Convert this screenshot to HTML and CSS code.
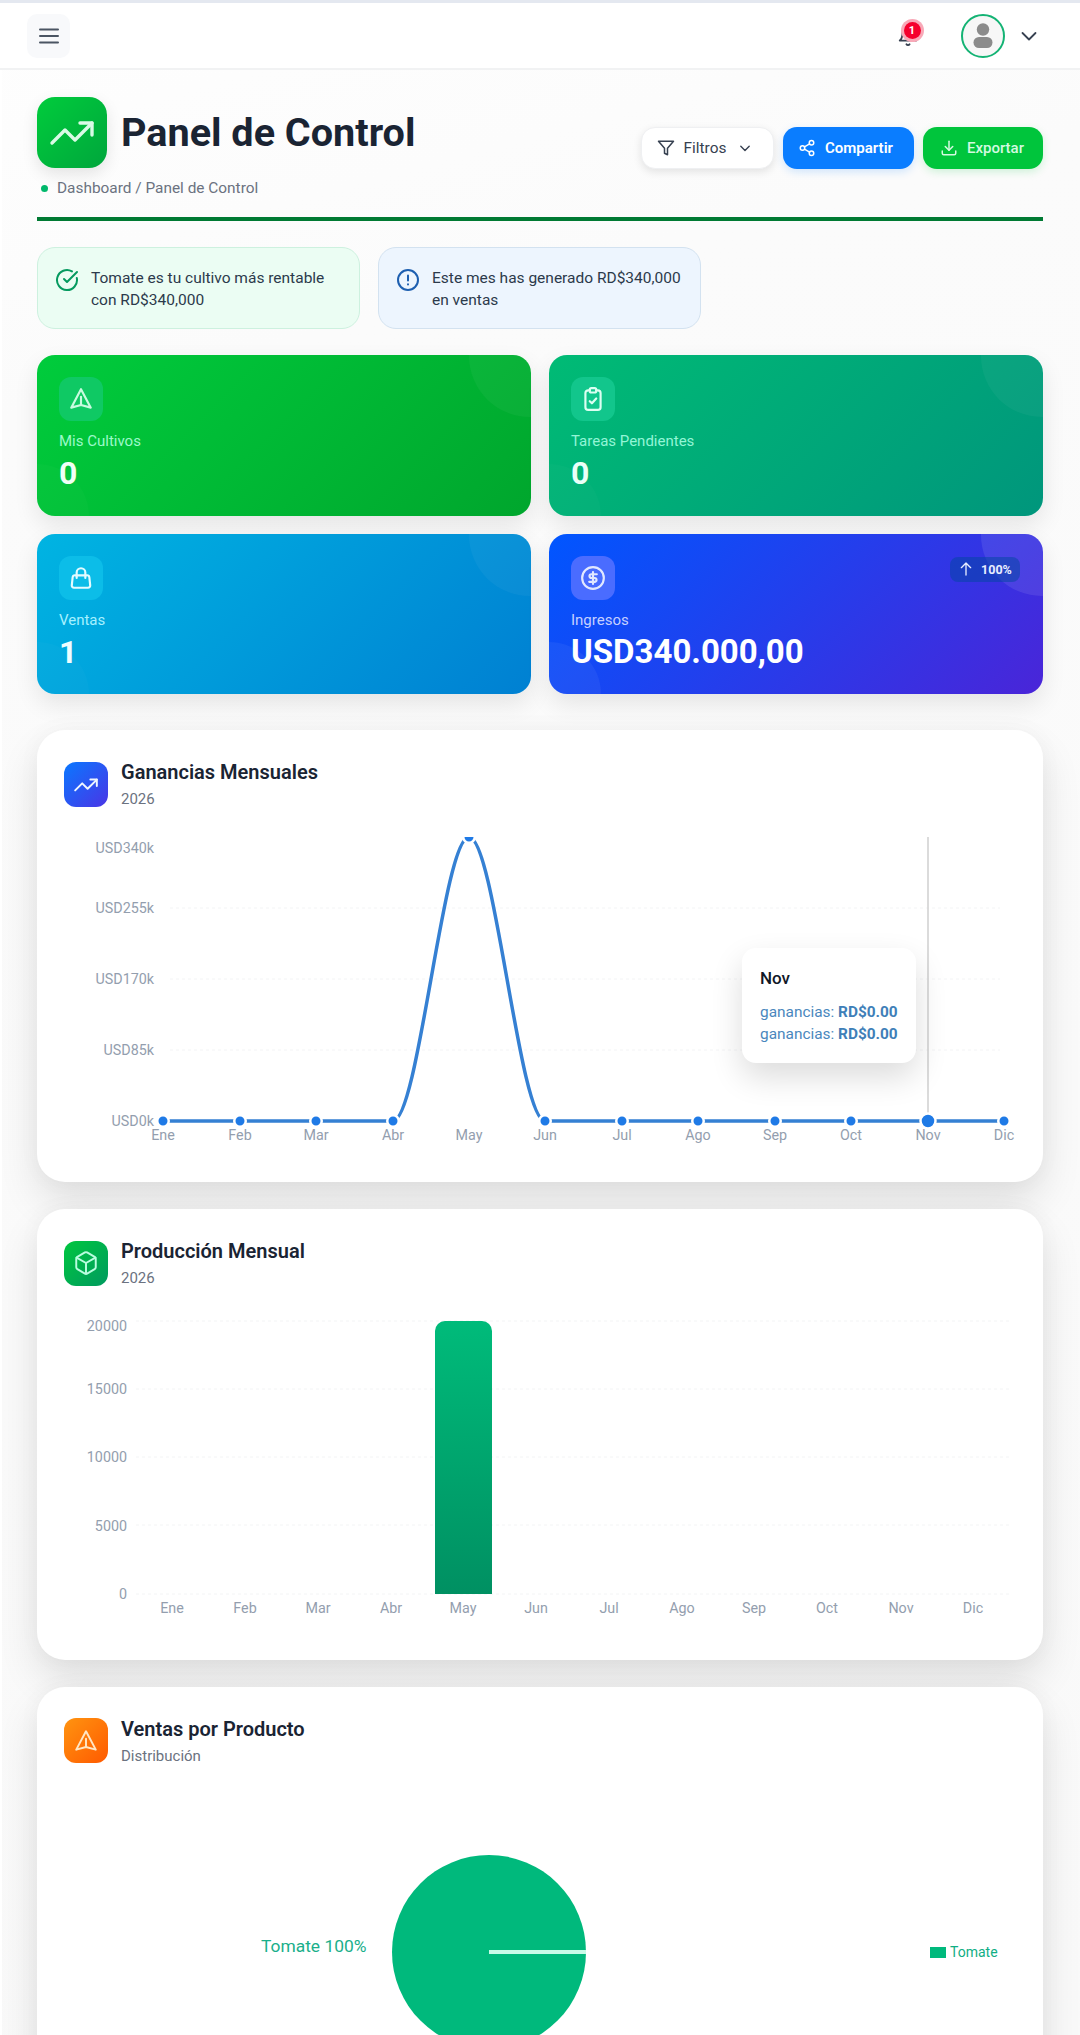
FILE: index.html
```html
<!DOCTYPE html>
<html lang="es">
<head>
<meta charset="utf-8">
<title>Panel de Control</title>
<link rel="stylesheet" href="styles.css">
</head>
<body>
<header class="topbar">
  <button class="menu-btn" aria-label="Menú">
    <svg class="ico" width="24" height="24" viewBox="0 0 24 24"><path d="M3 5.5h18M3 12h18M3 18.5h18"/></svg>
  </button>
  <div class="top-right">
    <div class="bell">
      <svg class="ico" width="22" height="22" viewBox="0 0 24 24"><path d="M6 8a6 6 0 0 1 12 0c0 7 3 9 3 9H3s3-2 3-9"/><path d="M10.3 21a1.94 1.94 0 0 0 3.4 0"/></svg>
      <span class="bell-badge">1</span>
    </div>
    <div class="avatar">
      <svg width="40" height="40" viewBox="0 0 40 40"><circle cx="20" cy="13.5" r="6.2" fill="#8b8b8b"/><rect x="10.5" y="21" width="19" height="11" rx="5.5" fill="#8b8b8b"/></svg>
    </div>
    <svg class="ico chev" width="20" height="20" viewBox="0 0 20 20"><path d="M3.5 7l6.5 6.5L16.500 7"/></svg>
  </div>
</header>

<main class="page">
  <section class="heading">
    <div>
      <div class="title-row">
        <div class="logo">
          <svg class="ico" width="48" height="48" viewBox="0 0 24 24"><path d="M22 7l-8.500 8.500-5-5L2 17"/><path d="M16 7h6v6"/></svg>
        </div>
        <h1>Panel de Control</h1>
      </div>
      <div class="crumb"><span class="crumb-dot"></span>Dashboard / Panel de Control</div>
    </div>
    <div class="actions">
      <button class="btn btn-white">
        <svg class="ico" width="18" height="18" viewBox="0 0 24 24"><path d="M22 3H2l8 9.460V19l4 2v-8.540z"/></svg>
        <span>Filtros</span>
        <svg class="ico btn-chev" width="14" height="14" viewBox="0 0 20 20"><path d="M4 7.500l6 6 6-6"/></svg>
      </button>
      <button class="btn btn-blue">
        <svg class="ico" width="18" height="18" viewBox="0 0 24 24"><circle cx="18" cy="5" r="3"/><circle cx="6" cy="12" r="3"/><circle cx="18" cy="19" r="3"/><path d="M8.590 13.510l6.830 3.980M15.410 6.510l-6.820 3.980"/></svg>
        <span>Compartir</span>
      </button>
      <button class="btn btn-green">
        <svg class="ico" width="18" height="18" viewBox="0 0 24 24"><path d="M3 16v3a2 2 0 0 0 2 2h14a2 2 0 0 0 2-2v-3"/><path d="M7 10l5 5 5-5"/><path d="M12 3v12"/></svg>
        <span>Exportar</span>
      </button>
    </div>
  </section>
  <div class="rule"></div>

  <section class="alerts">
    <div class="alert alert-green">
      <svg class="ico" width="24" height="24" viewBox="0 0 24 24"><path d="M21.800 10A10 10 0 1 1 17 3.340"/><path d="M9 11l3 3L22 4"/></svg>
      <p>Tomate es tu cultivo más rentable con RD$340,000</p>
    </div>
    <div class="alert alert-blue">
      <svg class="ico" width="24" height="24" viewBox="0 0 24 24"><circle cx="12" cy="12" r="10"/><path d="M12 7.500v5M12 16.300v.2"/></svg>
      <p>Este mes has generado RD$340,000 en ventas</p>
    </div>
  </section>

  <section class="stats">
    <article class="stat stat-green">
      <div class="stat-tile"><svg class="ico" width="26" height="26" viewBox="0 0 24 24"><path d="M12 3l9 17-9-2.500L3 20z"/><path d="M12 10v7.500"/></svg></div>
      <div class="stat-label">Mis Cultivos</div>
      <div class="stat-value">0</div>
    </article>
    <article class="stat stat-teal">
      <div class="stat-tile"><svg class="ico" width="26" height="26" viewBox="0 0 24 24"><rect x="9" y="2" width="6" height="4" rx="1.500"/><path d="M15 4h1.500A2.500 2.500 0 0 1 19 6.500v13a2.500 2.500 0 0 1-2.500 2.500h-9A2.500 2.500 0 0 1 5 19.500v-13A2.500 2.500 0 0 1 7.500 4H9"/><path d="M9 14l2 2 4-4.500"/></svg></div>
      <div class="stat-label">Tareas Pendientes</div>
      <div class="stat-value">0</div>
    </article>
    <article class="stat stat-sky">
      <div class="stat-tile"><svg class="ico" width="26" height="26" viewBox="0 0 24 24"><path d="M6.300 9.500h11.400a2 2 0 0 1 2 1.800l.8 7.500a2 2 0 0 1-2 2.200H5.500a2 2 0 0 1-2-2.200l.8-7.500a2 2 0 0 1 2-1.800z"/><path d="M8 12V7a4 4 0 0 1 8 0v5"/></svg></div>
      <div class="stat-label">Ventas</div>
      <div class="stat-value">1</div>
    </article>
    <article class="stat stat-blue">
      <div class="stat-tile"><svg class="ico" width="26" height="26" viewBox="0 0 24 24"><circle cx="12" cy="12" r="10"/><path d="M15.500 8.500h-5a1.750 1.750 0 0 0 0 3.500h3a1.750 1.750 0 0 1 0 3.500h-5M12 6.500v11"/></svg></div>
      <div class="stat-label">Ingresos</div>
      <div class="stat-value">USD340.000,00</div>
      <div class="stat-badge">
        <svg class="ico" width="16" height="16" viewBox="0 0 24 24"><path d="M12 21V3M5 10l7-7 7 7"/></svg>
        <span>100%</span>
      </div>
    </article>
  </section>

  <section class="chart-card">
    <div class="chart-head">
      <div class="chart-tile tile-blue"><svg class="ico" width="26" height="26" viewBox="0 0 24 24"><path d="M22 7l-8.500 8.500-5-5L2 17"/><path d="M16 7h6v6"/></svg></div>
      <div class="chart-titles"><h2>Ganancias Mensuales</h2><p>2026</p></div>
    </div>
    <div class="plot plot-line">
      <svg class="plot-svg" width="952" height="313" viewBox="64 837 952 313">
        <g class="grid">
          <path d="M170 908H1000M170 979H1000M170 1050H1000"/>
        </g>
        <g class="tick tick-y">
          <text x="154" y="848">USD340k</text>
          <text x="154" y="908">USD255k</text>
          <text x="154" y="979">USD170k</text>
          <text x="154" y="1050">USD85k</text>
          <text x="154" y="1121">USD0k</text>
        </g>
        <g class="tick tick-x">
          <text x="163" y="1135">Ene</text><text x="240" y="1135">Feb</text><text x="316" y="1135">Mar</text><text x="393" y="1135">Abr</text><text x="469" y="1135">May</text><text x="545" y="1135">Jun</text><text x="622" y="1135">Jul</text><text x="698" y="1135">Ago</text><text x="775" y="1135">Sep</text><text x="851" y="1135">Oct</text><text x="928" y="1135">Nov</text><text x="1004" y="1135">Dic</text>
        </g>
        <path class="cursor" d="M928 837V1121"/>
        <path class="line" d="M163 1121H393C418.500 1121 443.500 837 469 837C494.500 837 519.500 1121 545 1121H1004"/>
        <g class="dots">
          <circle cx="163" cy="1121" r="5.750"/><circle cx="240" cy="1121" r="5.750"/><circle cx="316" cy="1121" r="5.750"/><circle cx="393" cy="1121" r="5.750"/><circle cx="469" cy="837" r="5.750"/><circle cx="545" cy="1121" r="5.750"/><circle cx="622" cy="1121" r="5.750"/><circle cx="698" cy="1121" r="5.750"/><circle cx="775" cy="1121" r="5.750"/><circle cx="851" cy="1121" r="5.750"/><circle cx="928" cy="1121" r="7.500"/><circle cx="1004" cy="1121" r="5.750"/>
        </g>
      </svg>
      <div class="tooltip">
        <div class="tooltip-title">Nov</div>
        <div class="tooltip-row">ganancias: <b>RD$0.00</b></div>
        <div class="tooltip-row">ganancias: <b>RD$0.00</b></div>
      </div>
    </div>
  </section>

  <section class="chart-card">
    <div class="chart-head">
      <div class="chart-tile tile-green"><svg class="ico" width="26" height="26" viewBox="0 0 24 24"><path d="M21 8a2 2 0 0 0-1-1.730l-7-4a2 2 0 0 0-2 0l-7 4A2 2 0 0 0 3 8v8a2 2 0 0 0 1 1.730l7 4a2 2 0 0 0 2 0l7-4A2 2 0 0 0 21 16z"/><path d="M3.300 7l8.700 5 8.700-5M12 22V12"/></svg></div>
      <div class="chart-titles"><h2>Producción Mensual</h2><p>2026</p></div>
    </div>
    <div class="plot plot-bar">
      <svg class="plot-svg" width="952" height="320" viewBox="64 1308 952 320">
        <defs>
          <linearGradient id="barFill" x1="0" y1="0" x2="0" y2="1"><stop offset="0" stop-color="#00bb7a"/><stop offset="1" stop-color="#009062"/></linearGradient>
        </defs>
        <g class="grid">
          <path d="M136 1321H1010M136 1389H1010M136 1457H1010M136 1525H1010M136 1594H1010"/>
        </g>
        <g class="tick tick-y">
          <text x="127" y="1326">20000</text>
          <text x="127" y="1389">15000</text>
          <text x="127" y="1457">10000</text>
          <text x="127" y="1526">5000</text>
          <text x="127" y="1594">0</text>
        </g>
        <g class="tick tick-x">
          <text x="172" y="1608">Ene</text><text x="245" y="1608">Feb</text><text x="318" y="1608">Mar</text><text x="391" y="1608">Abr</text><text x="463" y="1608">May</text><text x="536" y="1608">Jun</text><text x="609" y="1608">Jul</text><text x="682" y="1608">Ago</text><text x="754" y="1608">Sep</text><text x="827" y="1608">Oct</text><text x="901" y="1608">Nov</text><text x="973" y="1608">Dic</text>
        </g>
        <path fill="url(#barFill)" d="M435 1594V1331a10 10 0 0 1 10-10h37a10 10 0 0 1 10 10V1594z"/>
      </svg>
    </div>
  </section>

  <section class="chart-card chart-card-last">
    <div class="chart-head">
      <div class="chart-tile tile-orange"><svg class="ico" width="26" height="26" viewBox="0 0 24 24"><path d="M12 3l9 17-9-2.500L3 20z"/><path d="M12 10v7.500"/></svg></div>
      <div class="chart-titles"><h2>Ventas por Producto</h2><p>Distribución</p></div>
    </div>
    <div class="plot plot-pie">
      <svg class="plot-svg" width="952" height="400" viewBox="64 1787 952 400">
        <circle class="pie" cx="489" cy="1952" r="97"/>
        <path class="pie-cut" d="M489 1952H586"/>
        <text class="pie-label" x="261" y="1946">Tomate 100%</text>
        <rect class="legend-mark" x="930" y="1947" width="16" height="11"/>
        <text class="legend-text" x="950" y="1952">Tomate</text>
      </svg>
    </div>
  </section>
</main>
</body>
</html>
```

FILE: styles.css
```css
* { box-sizing: border-box; }

html, body {
  margin: 0;
  height: 100%;
  overflow: hidden;
}

body {
  background: linear-gradient(165deg, #fefefe, #fbfbfb 18%, #f9f9f9);
  color: #1a2433;
  font-family: Roboto, "Liberation Sans", sans-serif;
}

h1, h2, p { margin: 0; }

button {
  font: inherit;
  border: 0;
  cursor: pointer;
}

.ico {
  display: block;
  flex: none;
  fill: none;
  stroke: currentColor;
  stroke-width: 2;
  stroke-linecap: round;
  stroke-linejoin: round;
}

/* Top bar */
.topbar {
  height: 70px;
  display: flex;
  align-items: center;
  justify-content: space-between;
  padding: 0 41px 0 27px;
  background: #fff;
  border-top: 3px solid #e4e8f0;
  border-bottom: 2px solid #f1f2f3;
}

.menu-btn {
  width: 43px;
  height: 44px;
  display: flex;
  align-items: center;
  justify-content: center;
  border-radius: 10px;
  background: #f8f9fb;
  color: #4b5563;
  padding: 0;
}

.top-right {
  display: flex;
  align-items: center;
}

.bell {
  position: relative;
  width: 24px;
  height: 22px;
  margin-top: 1px;
  margin-right: 41px;
  padding-left: 1px;
  color: #374151;
}

.bell-badge {
  position: absolute;
  top: -3px;
  left: 7.500px;
  width: 17px;
  height: 17px;
  border-radius: 50%;
  background: #f5002d;
  box-shadow: 0 0 0 3px #f8a9b8;
  color: #fff;
  font-size: 11px;
  font-weight: 700;
  line-height: 17px;
  text-align: center;
}

.avatar {
  width: 44px;
  height: 44px;
  display: flex;
  align-items: center;
  justify-content: center;
  border-radius: 50%;
  border: 2px solid #14b374;
  background: #f7f7f7;
  margin-right: 14px;
}

.chev { color: #374151; stroke-width: 1.8; }

/* Page */
.page {
  padding: 27px 37px 0 35px;
  border-left: 2px solid #fff;
}

.heading {
  display: flex;
  align-items: center;
  justify-content: space-between;
}

.title-row {
  display: flex;
  align-items: center;
  gap: 14px;
}

.logo {
  width: 70px;
  height: 71px;
  display: flex;
  align-items: center;
  justify-content: center;
  border-radius: 18px;
  background: linear-gradient(135deg, #00cc3c, #00a63c);
  box-shadow: 0 6px 16px rgba(0, 0, 0, .1);
  color: #d9fbe6;
}

.logo .ico { stroke-width: 1.7; }

h1 {
  font-size: 39.600px;
  line-height: 48px;
  font-weight: 700;
  color: #1a2433;
}

.crumb {
  display: flex;
  align-items: center;
  gap: 9px;
  margin-top: 10px;
  padding-left: 4px;
  font-size: 15.400px;
  line-height: 20px;
  color: #6b7280;
}

.crumb-dot {
  width: 7px;
  height: 7px;
  border-radius: 50%;
  background: #00b86b;
}

.actions {
  display: flex;
  gap: 9px;
}

.btn {
  height: 42px;
  display: flex;
  align-items: center;
  justify-content: center;
  border-radius: 14px;
  font-size: 15px;
  font-weight: 500;
}

.btn-white {
  width: 133px;
  gap: 9px;
  padding: 0 6px 0 0;
  background: #fff;
  border: 1px solid #eff0f2;
  color: #374151;
  font-weight: 400;
  font-size: 15.400px;
  box-shadow: 0 3px 8px rgba(0, 0, 0, .1);
}

.btn-chev { margin-left: 3px; }

.btn-blue {
  width: 131px;
  gap: 9px;
  padding: 0 6px 0 0;
  background: #0a7dff;
  color: #fff;
  font-weight: 600;
  box-shadow: 0 3px 8px rgba(10, 125, 255, .18);
}

.btn-green {
  width: 120px;
  gap: 9px;
  padding: 0 2px 0 0;
  background: #00c53c;
  color: #d3fae0;
  box-shadow: 0 3px 8px rgba(0, 197, 60, .18);
}

.rule {
  height: 4px;
  margin-top: 19px;
  background: #007a33;
}

/* Alerts */
.alerts {
  display: flex;
  gap: 18px;
  margin-top: 26px;
}

.alert {
  width: 323px;
  height: 82px;
  display: flex;
  align-items: flex-start;
  gap: 12px;
  padding: 19px 10px 19px 17px;
  border-radius: 18px;
  border: 1px solid;
}

.alert p {
  font-size: 15.500px;
  line-height: 22px;
  color: #2c3a4b;
}

.alert .ico { margin-top: 1px; }

.alert-green {
  background: #ebfdf3;
  border-color: #cdf1df;
  color: #059a5f;
}

.alert-blue {
  background: #edf5fe;
  border-color: #d3e2f0;
  color: #1e5fb0;
}

/* Stat cards */
.stats {
  display: grid;
  grid-template-columns: 1fr 1fr;
  gap: 18px;
  margin-top: 26px;
}

.stat {
  position: relative;
  overflow: hidden;
  height: 160.500px;
  padding: 22px;
  border-radius: 18px;
  box-shadow: 0 10px 24px rgba(0, 0, 0, .09);
}

.stat::before,
.stat::after {
  content: "";
  position: absolute;
  border-radius: 50%;
}

.stat::before {
  width: 122px;
  height: 122px;
  top: -60px;
  right: -60px;
  background: rgba(255, 255, 255, .04);
}

.stat::after {
  width: 104px;
  height: 104px;
  bottom: -52px;
  left: -52px;
  background: rgba(255, 255, 255, .02);
}

.stat-tile {
  width: 44px;
  height: 44px;
  display: flex;
  align-items: center;
  justify-content: center;
  border-radius: 12px;
}

.stat-label {
  margin-top: 10px;
  font-size: 15px;
  line-height: 20px;
}

.stat-value {
  position: relative;
  z-index: 1;
  margin-top: 2px;
  font-size: 32px;
  line-height: 40px;
  font-weight: 700;
  color: #fff;
}

.stat-green { background: linear-gradient(135deg, #00cc3c, #00a62d); }
.stat-green .stat-tile { background: #0fc964; color: #c8fbe0; }
.stat-green .stat-label { color: #9cf9c9; }
.stat-green .stat-value { color: #f0fff6; }

.stat-teal { background: linear-gradient(135deg, #00bb75, #00967c); }
.stat-teal .stat-tile { background: #12c68c; color: #dcfff2; }
.stat-teal .stat-label { color: #93f5d6; }
.stat-teal .stat-value { color: #eafff8; }

.stat-sky { background: linear-gradient(135deg, #00b4e2, #0080d2); }
.stat-sky .stat-tile { background: #0cbde8; color: #e3fbff; }
.stat-sky .stat-label { color: #a6f1ff; }
.stat-sky .stat-value { color: #f0fdff; }

.stat-blue { background: linear-gradient(135deg, #0056ff, #4a25d8); }
.stat-blue::before { background: rgba(255, 255, 255, .09); }
.stat-blue::after { background: rgba(255, 255, 255, .05); }
.stat-blue .stat-tile { background: #4a6cff; color: #e2e8ff; }
.stat-blue .stat-label { color: #c6d0ff; }
.stat-blue .stat-value { font-size: 33px; }

.stat-badge {
  position: absolute;
  z-index: 1;
  top: 23px;
  right: 23px;
  width: 70px;
  height: 25px;
  display: flex;
  align-items: center;
  justify-content: center;
  gap: 7px;
  border-radius: 8px;
  background: rgba(0, 70, 160, .5);
  color: #e8edff;
  font-size: 12.500px;
  font-weight: 700;
}

/* Chart cards */
.chart-card {
  height: 451.500px;
  margin-top: 27px;
  padding: 32px 27px;
  border-radius: 28px;
  background: #fff;
  box-shadow: 0 20px 40px rgba(0, 0, 0, .11), 0 0 24px rgba(0, 0, 0, .03);
}

.stats + .chart-card { margin-top: 36px; }

.chart-card-last { height: 640px; padding-top: 31px; }

.chart-head {
  display: flex;
  gap: 13px;
  height: 45px;
}

.chart-titles { margin-top: -1px; }

.chart-card-last .chart-titles { margin-top: 0; }

.chart-tile {
  width: 44px;
  height: 45px;
  display: flex;
  align-items: center;
  justify-content: center;
  border-radius: 12px;
  color: #eef6ff;
}

.chart-tile .ico { stroke-width: 1.8; }

.tile-blue { background: linear-gradient(135deg, #0a78ff, #4a35e6); }
.tile-green { background: linear-gradient(135deg, #00c63f, #009a5f); color: #b9fde0; }
.tile-orange { background: linear-gradient(135deg, #ff9410, #ff5a00); color: #ffe6c4; }

.chart-head h2 {
  font-size: 20px;
  line-height: 22px;
  font-weight: 600;
  color: #1a2433;
}

.chart-head p {
  margin-top: 7px;
  font-size: 15px;
  line-height: 18px;
  color: #6b7280;
}

.plot {
  position: relative;
}

.plot-line { margin-top: 30px; }
.plot-bar { margin-top: 22.500px; }
.plot-pie { margin-top: 24px; }

.plot-svg {
  display: block;
}

.plot-svg text {
  font-family: Roboto, "Liberation Sans", sans-serif;
  dominant-baseline: central;
}

.grid path {
  fill: none;
  stroke: #f3f4f5;
  stroke-width: 1;
  stroke-dasharray: 3 3;
}

.tick text {
  font-size: 14.300px;
  fill: #939eae;
}

.tick-y text { text-anchor: end; }
.tick-x text { text-anchor: middle; }

.cursor {
  fill: none;
  stroke: #cfcfcf;
  stroke-width: 1.500;
}

.line {
  fill: none;
  stroke: #3580d3;
  stroke-width: 3.500;
}

.dots circle {
  fill: #1f7ae6;
  stroke: #fff;
  stroke-width: 2.500;
}

.tooltip {
  position: absolute;
  top: 111px;
  left: 678px;
  width: 174px;
  height: 115px;
  padding: 19px 0 0 18px;
  border-radius: 14px;
  background: #fff;
  box-shadow: 0 14px 32px rgba(0, 0, 0, .14);
}

.tooltip-title {
  font-size: 17px;
  line-height: 22px;
  font-weight: 500;
  color: #111827;
  margin-bottom: 12px;
}

.tooltip-row {
  font-size: 15.400px;
  line-height: 22px;
  color: #4a87bd;
}

.tooltip-row b { font-weight: 700; color: #3f7fb8; }

.pie { fill: #00b97c; }

.pie-cut {
  fill: none;
  stroke: #c8fbe8;
  stroke-width: 4;
}

.pie-label {
  font-size: 17.400px;
  fill: #1aaf8b;
}

.legend-mark { fill: #00b97c; }

.legend-text {
  font-size: 14px;
  fill: #10ae84;
}
```
